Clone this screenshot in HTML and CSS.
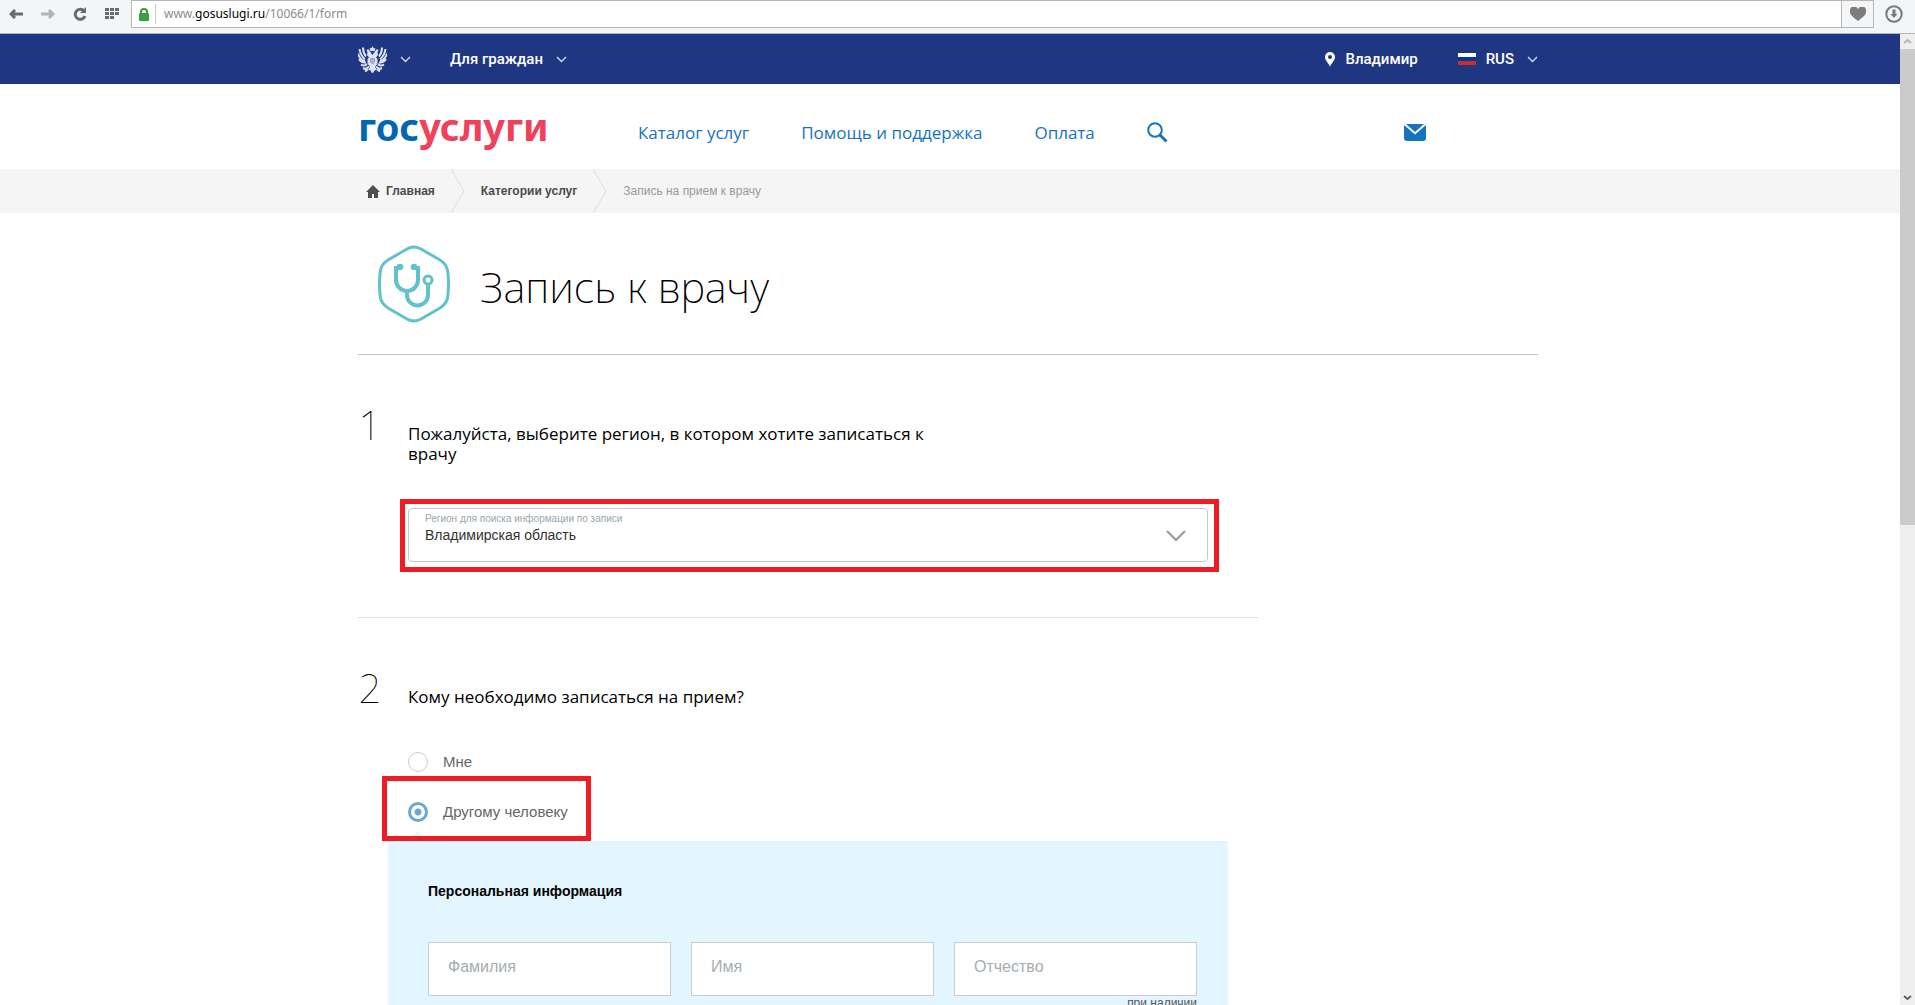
FILE: index.html
```html
<!DOCTYPE html>
<html lang="ru">
<head>
<meta charset="utf-8">
<title>Запись к врачу</title>
<link rel="stylesheet" href="styles.css">
</head>
<body>
<div class="browser">
  <div class="toolbar">
    <button class="tool" aria-label="Назад"><svg width="14" height="10" viewBox="0 0 14 10"><path d="M6 1 2 5l4 4M2 5h12" fill="none" stroke="#6b6b6b" stroke-width="3"/></svg></button>
    <button class="tool" aria-label="Вперёд"><svg width="14" height="10" viewBox="0 0 14 10"><path d="m8 1 4 4-4 4M12 5H0" fill="none" stroke="#b4b4b4" stroke-width="3"/></svg></button>
    <button class="tool" aria-label="Обновить"><svg width="14" height="14" viewBox="0 0 14 14"><path d="M11 4a5 5 0 1 0 1 5" fill="none" stroke="#6b6b6b" stroke-width="3"/><path d="M13 0v6H7z" fill="#6b6b6b"/></svg></button>
    <button class="tool" aria-label="Экспресс-панель"><svg width="14" height="11" viewBox="0 0 14 11" fill="#6b6b6b"><path d="M0 0h4v3H0zM5 0h4v3H5zM10 0h4v3h-4zM0 4h4v3H0zM5 4h4v3H5zM10 4h4v3h-4zM0 8h4v3H0zM5 8h4v3H5z"/></svg></button>
    <div class="address">
      <svg class="lock" width="10" height="13" viewBox="0 0 10 13"><path d="M2 6V4a3 3 0 0 1 6 0v2" fill="none" stroke="#3d9640" stroke-width="2"/><rect y="5" width="10" height="8" rx="1" fill="#3da03f"/></svg>
      <span class="url">www.<b>gosuslugi.ru</b>/10066/1/form</span>
      <button class="heart" aria-label="В закладки"><svg width="16" height="14" viewBox="0 0 16 14"><path d="M8 14C3 10 0 8 0 4.500A4 4 0 0 1 8 2.500 4 4 0 0 1 16 4.500C16 8 13 10 8 14z" fill="#7d7d7d"/></svg></button>
    </div>
    <button class="tool" aria-label="Загрузки"><svg width="18" height="18" viewBox="0 0 18 18"><circle cx="9" cy="9" r="7.700" fill="none" stroke="#76787a" stroke-width="2"/><path d="M7.500 4.500h3V9h2L9 13 5.500 9h2z" fill="#76787a"/></svg></button>
  </div>

  <div class="viewport">
    <div class="page">
      <div class="topbar">
        <div class="wrap topbar-row">
          <a class="top-link emblem" href="#" aria-label="Государственные ресурсы">
            <svg width="29" height="27" viewBox="0 0 58 54" fill="#dfe3f0">
              <path d="M29 0l2 4 4 1-2 5h-8l-2-5 4-1z"/>
              <path d="M17 9l3-3 3 3 3 5 3 4 3-4 3-5 3-3 3 3-2 3 1 6-4 5 3 3v9l-5 7 4 5-5 2-2 4-2 1-2-1-2-4-5-2 4-5-5-7v-9l3-3-4-5 1-6z"/>
              <path d="M16 21C12 16 10 10 10 3M14 26C7 21 4 14 3 6M14 30C7 28 2 22 0 15M16 33C10 34 5 31 2 26M18 36c-4 4-8 4-12 1M42 21c4-5 6-11 6-18M44 26c7-5 10-12 11-20M44 30c7-2 12-8 14-15M42 33c6 1 11-2 14-7M40 36c4 4 8 4 12 1M22 41l-7 5-5-2M36 41l7 5 5-2M20 47l-6 4M38 47l6 4" fill="none" stroke="#dfe3f0" stroke-width="4"/>
              <path d="M25 25h8v7l-4 4-4-4zM25 11l3 3M33 11l-3 3" fill="#a9b3d6" stroke="#5f70ac"/>
            </svg>
            <svg class="chev" width="11" height="7" viewBox="0 0 11 7"><path d="m1 1 4.500 4.500L10 1"/></svg>
          </a>
          <a class="top-link" href="#">Для граждан <svg class="chev" width="11" height="7" viewBox="0 0 11 7"><path d="m1 1 4.500 4.500L10 1"/></svg></a>
          <a class="top-link city" href="#"><svg width="10" height="15" viewBox="0 0 10 15"><path d="M5 0a5 5 0 0 1 5 5c0 4-4 6-5 10C4 11 0 9 0 5a5 5 0 0 1 5-5zm0 3a2 2 0 1 0 0 4 2 2 0 0 0 0-4z" fill="#fff"/></svg>Владимир</a>
          <a class="top-link lang" href="#"><svg width="18" height="12" viewBox="0 0 18 12"><path d="M0 0h18v4H0z" fill="#fff"/><path d="M0 4h18v4H0z" fill="#0039a6"/><path d="M0 8h18v4H0z" fill="#d52b1e"/></svg>RUS <svg class="chev" width="11" height="7" viewBox="0 0 11 7"><path d="m1 1 4.500 4.500L10 1"/></svg></a>
        </div>
      </div>

      <header class="header">
        <div class="wrap header-row">
          <a class="logo" href="#">гос<span>услуги</span></a>
          <nav class="nav">
            <a href="#">Каталог услуг</a>
            <a href="#">Помощь и поддержка</a>
            <a href="#">Оплата</a>
            <button class="icon-button" aria-label="Поиск"><svg width="21" height="21" viewBox="0 0 21 21" fill="none" stroke="#1573c0"><circle cx="8" cy="8" r="6.800" stroke-width="2"/><path d="m13 13 6.500 6.500" stroke-width="3"/></svg></button>
          </nav>
          <a class="mail" href="#" aria-label="Сообщения"><svg width="22" height="17" viewBox="0 0 22 17"><path d="M2 0h18l-9 8z" fill="#1573c0"/><path d="M0 1l11 9.500L22 1v13a3 3 0 0 1-3 3H3a3 3 0 0 1-3-3z" fill="#1573c0"/></svg></a>
        </div>
      </header>

      <nav class="crumbs" aria-label="Навигация">
        <div class="wrap crumbs-row">
          <a class="home" href="#"><svg width="14" height="13" viewBox="0 0 14 13"><path d="M7 0l7 7h-2v6H8V9H6v4H2V7H0z" fill="#4e4e4e"/></svg>Главная</a>
          <svg class="sep" width="14" height="44" viewBox="0 0 14 44"><path d="M0 0l13 22L0 44" fill="none" stroke="#dcdcdc" stroke-width="1"/></svg>
          <a href="#">Категории услуг</a>
          <svg class="sep" width="14" height="44" viewBox="0 0 14 44"><path d="M0 0l13 22L0 44" fill="none" stroke="#dcdcdc" stroke-width="1"/></svg>
          <span>Запись на прием к врачу</span>
        </div>
      </nav>

      <main class="wrap">
        <div class="title">
          <svg width="72" height="78" viewBox="0 0 72 78" fill="none" stroke="#62c2ca">
            <path d="M29 4q7-4 14 0l19 11q8 5 8 14 1 10 0 20 0 9-8 14L43 74q-7 4-14 0L10 63q-8-5-8-14-1-10 0-20 0-9 8-14z" stroke-width="3"/>
            <path d="M21 23h-3v12a11 11 0 0 0 22 0V23h-3M29 46v4a10.500 10.500 0 0 0 21 0V40" stroke-width="4"/>
            <circle cx="50" cy="35" r="4" stroke-width="3"/>
            <g fill="#62c2ca" stroke="none"><circle cx="22" cy="22" r="3.300"/><circle cx="36" cy="22" r="3.300"/></g>
          </svg>
          <h1>Запись к врачу</h1>
        </div>

        <form>
          <section class="step">
            <span class="number">1</span>
            <h2>Пожалуйста, выберите регион, в котором хотите записаться к врачу</h2>
            <div class="step-body">
              <div class="region marked">
                <label for="region">Регион для поиска информации по записи</label>
                <select id="region"><option>Владимирская область</option></select>
                <svg width="20" height="12" viewBox="0 0 20 12"><path d="m1 1 9 9 9-9" fill="none" stroke="#999" stroke-width="2"/></svg>
              </div>
            </div>
          </section>

          <section class="step">
            <span class="number">2</span>
            <h2>Кому необходимо записаться на прием?</h2>
            <div class="step-body">
              <label class="choice"><input type="radio" name="who">Мне</label>
              <label class="choice marked"><input type="radio" name="who" checked>Другому человеку</label>
              <div class="panel">
                <h3>Персональная информация</h3>
                <div class="fields">
                  <input type="text" placeholder="Фамилия" aria-label="Фамилия">
                  <input type="text" placeholder="Имя" aria-label="Имя">
                  <div class="field">
                    <input type="text" placeholder="Отчество" aria-label="Отчество" aria-describedby="hint">
                    <small id="hint">при наличии</small>
                  </div>
                </div>
              </div>
            </div>
          </section>
        </form>
      </main>
    </div>

    <div class="scrollbar" aria-hidden="true">
      <svg width="15" height="15" viewBox="0 0 15 15"><path d="m4 9 3.500-3L11 9" fill="none" stroke="#b5b5b5" stroke-width="2"/></svg>
      <div class="thumb"></div>
      <svg class="down" width="15" height="15" viewBox="0 0 15 15"><path d="m4 6 3.500 3L11 6" fill="none" stroke="#606060" stroke-width="2"/></svg>
    </div>
  </div>
</div>
</body>
</html>
```
FILE: styles.css
```css
* { box-sizing: border-box; }
body { margin: 0; background: #fff; color: #000; font: 14px/20px "Liberation Sans", sans-serif; }
a { color: inherit; text-decoration: none; }
button { padding: 0; border: 0; background: none; }
svg { display: block; flex: none; }
h1, h2, h3 { margin: 0; font-weight: 400; }

.browser { display: flex; flex-direction: column; height: 100vh; overflow: hidden; }

/* Browser toolbar */
.toolbar { display: flex; align-items: flex-start; flex: none; height: 34px; padding: 0 5px 0 0; background: #f4f5f7; border-bottom: 1px solid #b4b6b8; }
.tool { display: flex; align-items: center; justify-content: center; width: 32px; height: 27px; }
.toolbar .address { display: flex; align-items: center; flex: 1; height: 28px; margin: 0 4px 0 3px; border: 1px solid #b4b6b8; background: #fff; }
.lock { margin-left: 7px; }
.url { flex: 1; margin-left: 6px; padding-left: 8px; border-left: 1px solid #ccc; font: 12px/20px "Noto Sans", sans-serif; color: #8c8c8c; }
.url b { font-weight: 400; color: #000; }
.heart { display: flex; align-items: center; justify-content: center; width: 32px; height: 26px; border-left: 1px solid #b4b6b8; background: #f4f5f7; }

.viewport { display: flex; flex: 1; min-height: 0; }
.page { flex: 1; min-width: 0; overflow: hidden; }
.wrap { max-width: 1184px; margin: 0 auto; padding-right: 4px; }

.scrollbar { display: flex; flex-direction: column; flex: none; width: 15px; background: #efefef; }
.thumb { flex: 0 0 49%; background: #cbcbcb; }
.down { margin-top: auto; }

/* Site header */
.topbar { background: #1f3683; color: #fff; font: 500 15px/20px Roboto, sans-serif; }
.topbar-row { display: flex; align-items: center; height: 50px; }
.top-link { display: flex; align-items: center; }
.chev { margin-left: 13px; fill: none; stroke: #d5daeb; stroke-width: 1.4; }
.emblem { margin-right: 39px; }
.city { gap: 10px; margin-left: auto; margin-right: 40px; }
.lang { gap: 10px; }
.lang .chev { margin-left: 3px; }

.header-row { display: flex; align-items: center; height: 85px; padding-top: 12px; }
.logo { width: 280px; margin-bottom: 14px; font: 700 38px/50px "Noto Sans", sans-serif; color: #0465b1; }
.logo span { color: #ef415c; }
.nav { display: flex; align-items: center; gap: 52px; font: 17px/24px "Open Sans", sans-serif; color: #1573c0; }
.mail { margin-left: auto; margin-right: 112px; }

.crumbs { background: #f5f5f5; font-size: 12px; }
.crumbs-row { display: flex; align-items: center; height: 44px; color: #999; }
.crumbs a { font-weight: 700; color: #4a4a4a; }
.home { display: flex; align-items: center; gap: 6px; margin-left: 8px; }
.sep { margin: 0 16px; }

.title { display: flex; align-items: center; gap: 30px; height: 142px; padding: 0 20px; border-bottom: 1px solid #c2c4c4; }
h1 { padding-top: 6px; font: 200 42px/60px "Noto Sans", sans-serif; }

/* Form steps */
.step { display: grid; grid-template-columns: 50px 1fr; align-items: baseline; width: 900px; max-width: 100%; padding: 50px 0 55px; border-bottom: 1px solid #d8dfe0; }
.number { width: 24px; text-align: center; font: 100 40px/40px "Noto Sans", sans-serif; }
h2 { max-width: 540px; font: 17px/20px "Open Sans", sans-serif; }
.step-body { grid-column: 2; margin-top: 44px; }

/* Red frames around the highlighted controls */
.marked { position: relative; }
.marked::after { content: ""; position: absolute; z-index: 1; inset: -9px -11px -10px -8px; border: 5px solid #ee1c24; pointer-events: none; }

.region { margin-right: 50px; }
.region label { position: absolute; left: 17px; top: 5px; font-size: 10px; line-height: 12px; color: #9aa5ad; }
.region select { display: block; width: 100%; height: 54px; padding: 4px 16px; border: 1px solid #c6c8c8; border-radius: 4px; background: #fff; appearance: none; font: 14px/20px "Liberation Sans", sans-serif; color: #333; }
.region svg { position: absolute; right: 22px; top: 22px; }

.choice { display: flex; align-items: center; gap: 15px; width: max-content; margin-bottom: 30px; font-size: 15px; color: #666; }
.choice input { appearance: none; width: 20px; height: 20px; margin: 0; border: 1px solid #ccc; border-radius: 50%; background: #fff; }
.choice input:checked { border: 3px solid #6ba7d3; background: radial-gradient(circle, #6ba7d3 3px, #fff 4px); }
.choice.marked { margin-bottom: 19px; }
.choice.marked::after { inset: -26px -23px -19px -26px; }

.panel { position: relative; margin: 0 30px 0 -20px; padding: 40px 31px 60px 40px; background: #e3f6ff; }
.panel::before { content: ""; position: absolute; left: 20px; top: -10px; border: 10px solid transparent; border-top: 0; border-bottom-color: #e3f6ff; }
h3 { margin-bottom: 41px; font: 700 14px/20px "Liberation Sans", sans-serif; }
.fields { display: grid; grid-template-columns: repeat(3, 1fr); gap: 20px; align-items: start; }
.fields input { width: 100%; height: 54px; padding: 0 19px 4px; border: 1px solid #c9cdd0; background: #fff; font: 16px/20px "Liberation Sans", sans-serif; }
.fields input::placeholder { color: #a5adb3; }
.field { display: flex; flex-direction: column; align-items: flex-end; }
.field small { font-size: 12px; line-height: 14px; color: #555; }
```
